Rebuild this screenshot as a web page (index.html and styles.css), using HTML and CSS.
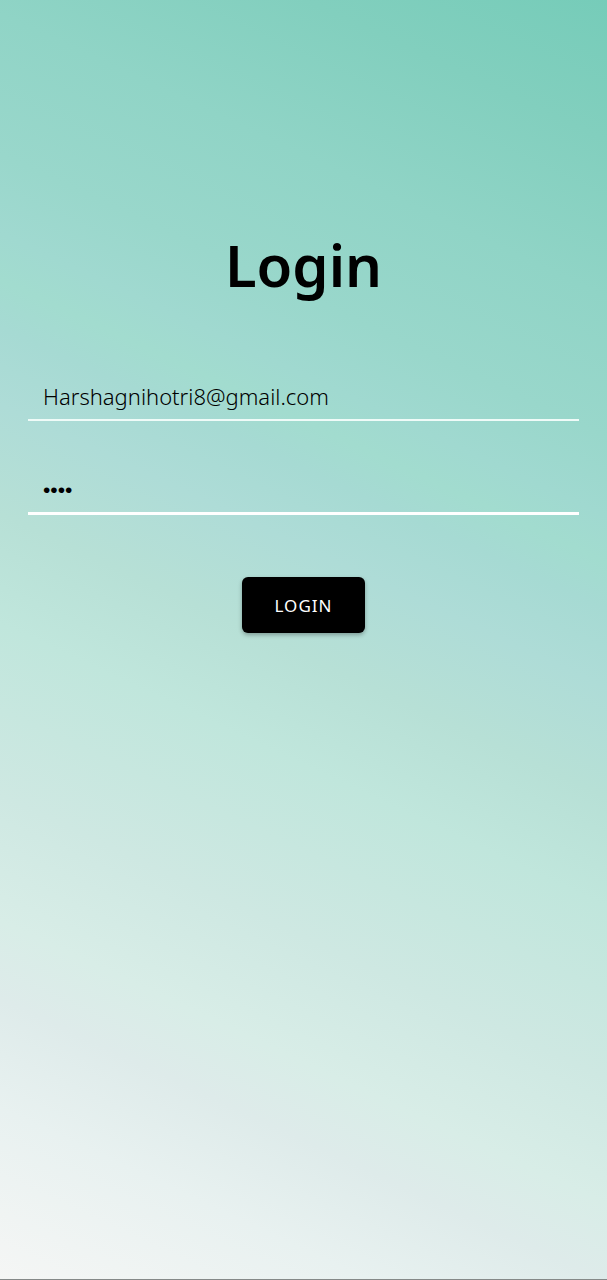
FILE: index.html
```html
<!DOCTYPE html>
<html lang="en">
<head>
<meta charset="utf-8">
<meta name="viewport" content="width=device-width, initial-scale=1">
<title>Login</title>
<link rel="stylesheet" href="styles.css">
</head>
<body class="page">
<main class="login">
  <h1 class="title">Login</h1>
  <form class="form">
    <input class="field" type="email" name="email" aria-label="Email" value="Harshagnihotri8@gmail.com">
    <input class="field field-active" type="password" name="password" aria-label="Password" value="1234">
    <button class="submit" type="button">LOGIN</button>
  </form>
</main>
</body>
</html>
```

FILE: styles.css
```css
* {
  box-sizing: border-box;
}

.page {
  margin: 0;
  min-height: 100vh;
  font-family: "Noto Sans", sans-serif;
  color: #000;
  background: linear-gradient(205deg, #76ccb9 0%, #82cfbe 9%, #90d4c6 19%, #99d7cb 28%, #a0d9d0 33%, #a2dccf 36%, #a6dad3 39%, #aedcd7 44%, #b7e0d6 51%, #c0e6dc 58%, #cee8e2 69%, #d8ede7 77%, #deebea 82%, #e8f1f0 89%, #f5f6f5 100%);
  border-bottom: 1px solid #858988;
}

.login {
  padding: 221px 28px 0;
}

.title {
  margin: 0;
  font-size: 58px;
  line-height: 88px;
  font-weight: 600;
  text-align: center;
}

.form {
  display: flex;
  flex-direction: column;
  margin-top: 63px;
}

.field {
  width: 100%;
  height: 49px;
  padding: 0 15px;
  border: 0;
  border-bottom: 2px solid #effbf8;
  border-radius: 0;
  outline: 0;
  background: transparent;
  color: #000;
  font: 300 22px "Noto Sans", sans-serif;
}

.field-active {
  height: 50px;
  margin-top: 44px;
  padding-top: 3px;
  border-bottom: 3px solid #fff;
  font: 400 21px "Liberation Sans", sans-serif;
}

.submit {
  align-self: center;
  width: 123px;
  height: 56px;
  margin-top: 62px;
  padding: 0;
  border: 0;
  border-radius: 6px;
  background: #000;
  color: #fff;
  font: 400 17px "Noto Sans", sans-serif;
  letter-spacing: 1px;
  box-shadow: 0 2px 4px rgba(0, 0, 0, 0.3);
}
```
